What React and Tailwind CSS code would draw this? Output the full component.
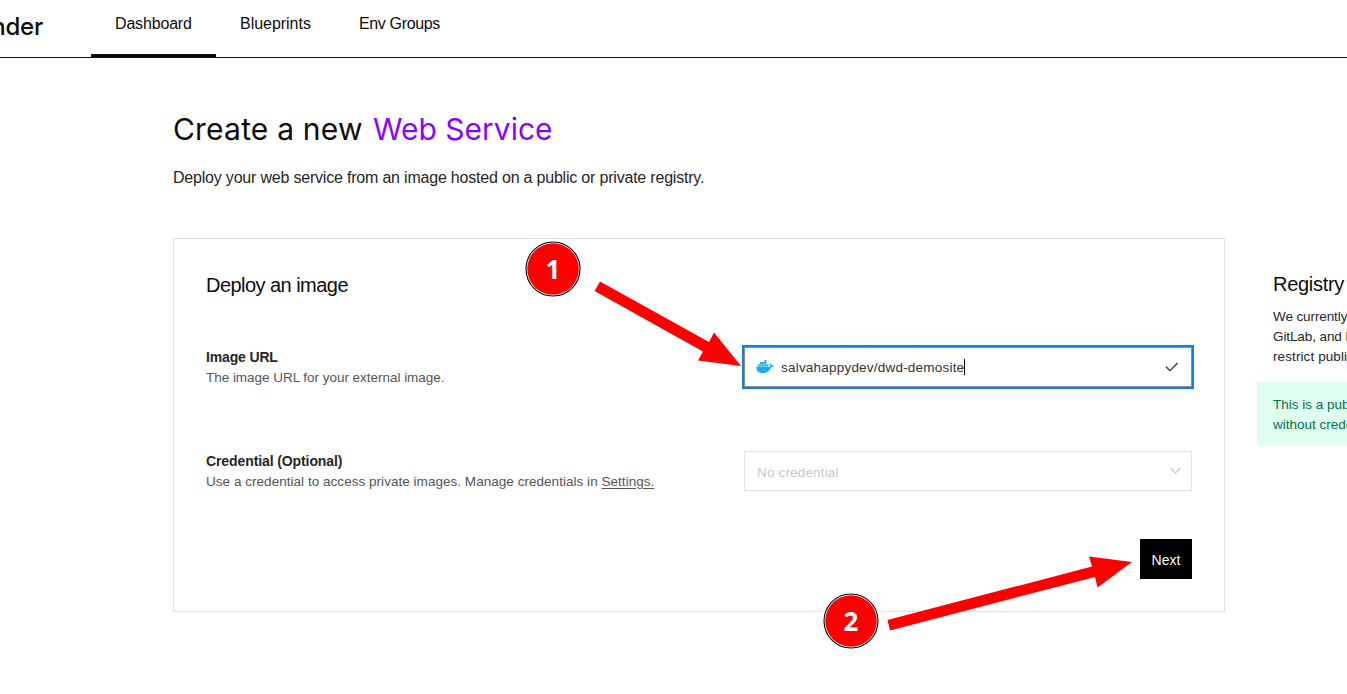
import React from "react";

const tabs = [
  { label: "Dashboard", cls: "w-[77px] tracking-[-0.17px]" },
  { label: "Blueprints", cls: "w-[71px] tracking-[-0.03px]" },
  { label: "Env Groups", cls: "w-[81px] tracking-[-0.35px]" },
];

function Header() {
  return (
    <header className="flex h-[58px] shrink-0 border-b border-[#0d0d0d]">
      <div className="flex w-[43px] justify-end overflow-hidden pt-[11px] font-['Inter',sans-serif] text-[24px] leading-8 font-medium tracking-[-0.2px] text-[#0d0d0d]">
        render
      </div>
      <nav className="ml-12 flex">
        {tabs.map((t, i) => (
          <div
            key={t.label}
            className={i === 0 ? "border-b-[3px] border-[#0d0d0d] px-6 pt-3" : "px-6 pt-3"}
          >
            <div className={`text-base leading-6 whitespace-nowrap text-[#0d0d0d] ${t.cls}`}>{t.label}</div>
          </div>
        ))}
      </nav>
    </header>
  );
}

function DockerIcon() {
  return (
    <svg className="mr-[7px]" width="18" height="14" viewBox="0 0 18 14" fill="#12b0ed">
      <path d="M.3 6.8H13c.8 0 1.200-.2 1.500-.4-.6-1-.5-2.200.1-3.100 .8.5 1.200 1.200 1.300 2 .7-.1 1.400 0 1.900.3-.4 1-1.400 1.500-2.700 1.500C13.900 11 11.200 13.100 7 13.100 2.800 13.100.1 11 .3 6.800Z" />
      <path d="M1.800 4.300h10.700v2.200H1.800ZM3.900 2.100h6.400v2H3.900ZM8.300.1h2v1.800h-2Z" />
      <path d="M3.900 4.300v2.200M6.050 2.100v4.400M8.200 2.100v4.400M10.350 4.300v2.200" stroke="#fff" strokeWidth=".3" />
    </svg>
  );
}

function Field({ title, children, control }) {
  return (
    <div className="flex h-[44px] items-center justify-between">
      <div>
        <div className="text-sm leading-5 font-bold whitespace-nowrap text-[#262626]">{title}</div>
        <div className="pt-px text-[13.5px] leading-5 whitespace-nowrap text-[#555]">{children}</div>
      </div>
      {control}
    </div>
  );
}

function Card() {
  return (
    <section className="h-[374px] w-[1052px] shrink-0 border border-[#e0e0e0] px-8 pt-8">
      <h2 className="text-xl leading-7 tracking-[-0.54px] text-[#0d0d0d]">Deploy an image</h2>
      <div className="mt-[46px]">
        <Field
          title={<span className="tracking-[-0.15px]">Image URL</span>}
          control={
            <div className="-mr-0.5 flex h-11 w-[452px] items-center border-2 border-[#0a84e0]">
              <div className="flex h-10 w-full items-center border border-[#8c8c8c] pl-[11px] text-[13.5px] text-[#333]">
                <DockerIcon />
                <span className="pt-0.5 tracking-[0.21px]">salvahappydev/dwd-demosite</span>
                <span className="h-4 w-px bg-black" />
                <svg className="mr-3 ml-auto" width="14" height="10" viewBox="0 0 14 10" fill="none" stroke="#333" strokeWidth="1.3">
                  <path d="M1 4.8 5 8.6 12.6 1" />
                </svg>
              </div>
            </div>
          }
        >
          <span className="tracking-[-0.03px]">The image URL for your external image.</span>
        </Field>
      </div>
      <div className="mt-[60px]">
        <Field
          title={<span className="tracking-[-0.1px]">Credential (Optional)</span>}
          control={
            <div className="flex h-10 w-[448px] items-center border border-[#e0e0e0] pr-[10px] pl-3 text-[13.5px] text-[#c7c7c7]">
              <span className="pt-1 tracking-[0.16px]">No credential</span>
              <svg className="ml-auto" width="11" height="8" viewBox="0 0 11 8" fill="none" stroke="#ccc" strokeWidth="1.3">
                <path d="M.8 1.2 5.5 6 10.2 1.2" />
              </svg>
            </div>
          }
        >
          <span className="tracking-[0.035px]">
            Use a credential to access private images. Manage credentials in{" "}
            <a className="underline underline-offset-2">Settings.</a>
          </span>
        </Field>
      </div>
      <div className="mt-[46px] flex justify-end">
        <button className="h-10 w-[52px] bg-black pt-0.5 text-sm text-white">Next</button>
      </div>
    </section>
  );
}

function Registry() {
  return (
    <aside className="w-[320px] shrink-0 pt-8 pl-8">
      <h2 className="pl-4 text-xl leading-7 tracking-[-0.3px] text-[#0d0d0d]">Registry Support</h2>
      <div className="mt-[9px] pl-4 text-[13.5px] leading-5 whitespace-nowrap text-[#262626]">
        <p className="tracking-[-0.1px]">We currently support Docker Hub, GitHub,</p>
        <p className="tracking-[-0.1px]">GitLab, and Imported registries that</p>
        <p className="tracking-[0.1px]">restrict public access.</p>
      </div>
      <div className="mt-[15px] h-16 bg-[#e0ffee] px-4 pt-[13px] text-[13.5px] leading-5 whitespace-nowrap text-[#00734c]">
        <p>This is a public image, accessible</p>
        <p>without credentials.</p>
      </div>
    </aside>
  );
}

function Badge({ n, pos }) {
  return (
    <svg className={`absolute ${pos}`} width="56" height="56" viewBox="0 0 56 56">
      <circle cx="28" cy="28" r="27" fill="#fff" stroke="#000" strokeWidth="1.1" />
      <circle cx="28" cy="28" r="25.8" fill="#fe0000" />
      <text x="28" y="38" textAnchor="middle" fill="#fff" className="font-['Open_Sans',sans-serif] text-[26px] font-bold">
        {n}
      </text>
    </svg>
  );
}

export default function App() {
  return (
    <div className="relative flex h-[694px] w-[1347px] flex-col overflow-hidden bg-white font-['Liberation_Sans',Arial,sans-serif]">
      <Header />
      <main className="pt-[51px] pl-[173px]">
        <h1 className="flex font-['Inter',sans-serif] text-[30px] leading-10 font-normal whitespace-nowrap text-[#0d0d0d]">
          <span className="w-[200px] tracking-[0.2px]">Create a new</span>
          <span className="text-[#8a05ff]">Web Service</span>
        </h1>
        <p className="mt-[17px] text-base leading-6 tracking-[-0.2px] whitespace-nowrap text-[#262626]">
          Deploy your web service from an image hosted on a public or private registry.
        </p>
        <div className="mt-12 flex">
          <Card />
          <Registry />
        </div>
      </main>
      <svg className="absolute inset-0" width="1347" height="694" viewBox="0 0 1347 694" fill="#fe0000">
        <path d="M600 281.5 709 342 714 332.5 741 366 698 360.5 703 351.5 594.5 291Z" />
        <path d="M887.5 620 1092 566.5 1089 556.5 1132 562 1097.500 587.500 1095 577 890 630.500Z" />
      </svg>
      <Badge n="1" pos="left-[525px] top-[241px]" />
      <Badge n="2" pos="left-[823px] top-[593px]" />
    </div>
  );
}
